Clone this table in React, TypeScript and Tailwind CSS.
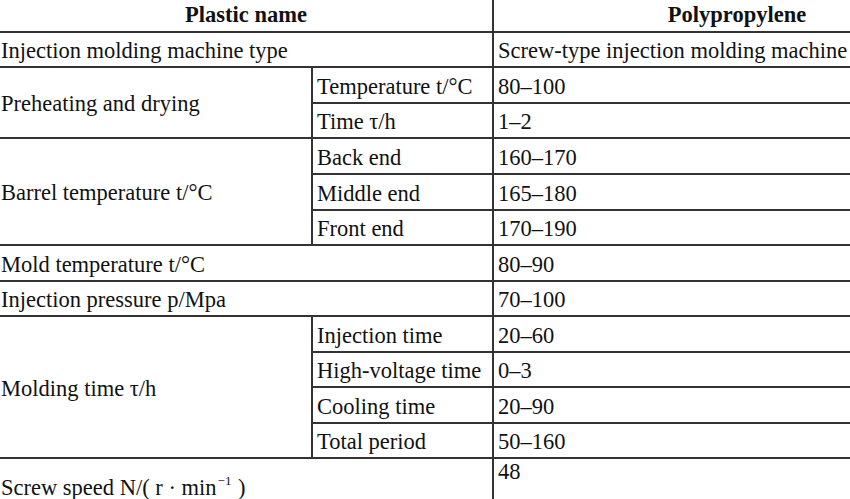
import React from "react";

const L = "border-t-2 border-[#333] flex items-center pl-[1px] pt-[4px]";
const M = "border-t-2 border-l-2 border-[#333] flex items-center pl-[4px] pt-[4px]";
const R = "border-t-2 border-l-2 border-[#333] flex items-center pl-[4px] pt-[4px]";

export default function App() {
  return (
    <div className="w-[850px] h-[499px] overflow-hidden bg-white">
      <div
        className="grid grid-cols-[311px_181px_488px] grid-rows-[31px_35px_36px_35px_36px_36px_35px_36px_35px_36px_35px_36px_35px_56px] w-[980px] text-[22.5px] leading-none text-[#111]"
        style={{ fontFamily: '"Liberation Serif", "Times New Roman", serif' }}
      >
        <div className="col-span-2 flex items-center justify-center font-bold">Plastic name</div>
        <div className="border-l-2 border-[#333] flex items-center justify-center font-bold">Polypropylene</div>

        <div className={`${L} col-span-2`}>Injection molding machine type</div>
        <div className={R}>Screw-type injection molding machine</div>

        <div className={`${L} row-span-2`}>Preheating and drying</div>
        <div className={M}>Temperature t/°C</div>
        <div className={R}>80–100</div>
        <div className={M}>Time τ/h</div>
        <div className={R}>1–2</div>

        <div className={`${L} row-span-3`}>Barrel temperature t/°C</div>
        <div className={M}>Back end</div>
        <div className={R}>160–170</div>
        <div className={M}>Middle end</div>
        <div className={R}>165–180</div>
        <div className={M}>Front end</div>
        <div className={R}>170–190</div>

        <div className={`${L} col-span-2`}>Mold temperature t/°C</div>
        <div className={R}>80–90</div>

        <div className={`${L} col-span-2`}>Injection pressure p/Mpa</div>
        <div className={R}>70–100</div>

        <div className={`${L} row-span-4`}>Molding time τ/h</div>
        <div className={M}>Injection time</div>
        <div className={R}>20–60</div>
        <div className={M}>High-voltage time</div>
        <div className={R}>0–3</div>
        <div className={M}>Cooling time</div>
        <div className={R}>20–90</div>
        <div className={M}>Total period</div>
        <div className={R}>50–160</div>

        <div className={`${L} col-span-2`}>
          <span className="relative">
            Screw speed N/( r · min<span className="inline-block text-[13px] relative -top-[10px] px-[1px]">−1</span> )
          </span>
        </div>
        <div className="border-t-2 border-l-2 border-[#333] pl-[4px] pt-[2px]">48</div>
      </div>
    </div>
  );
}
